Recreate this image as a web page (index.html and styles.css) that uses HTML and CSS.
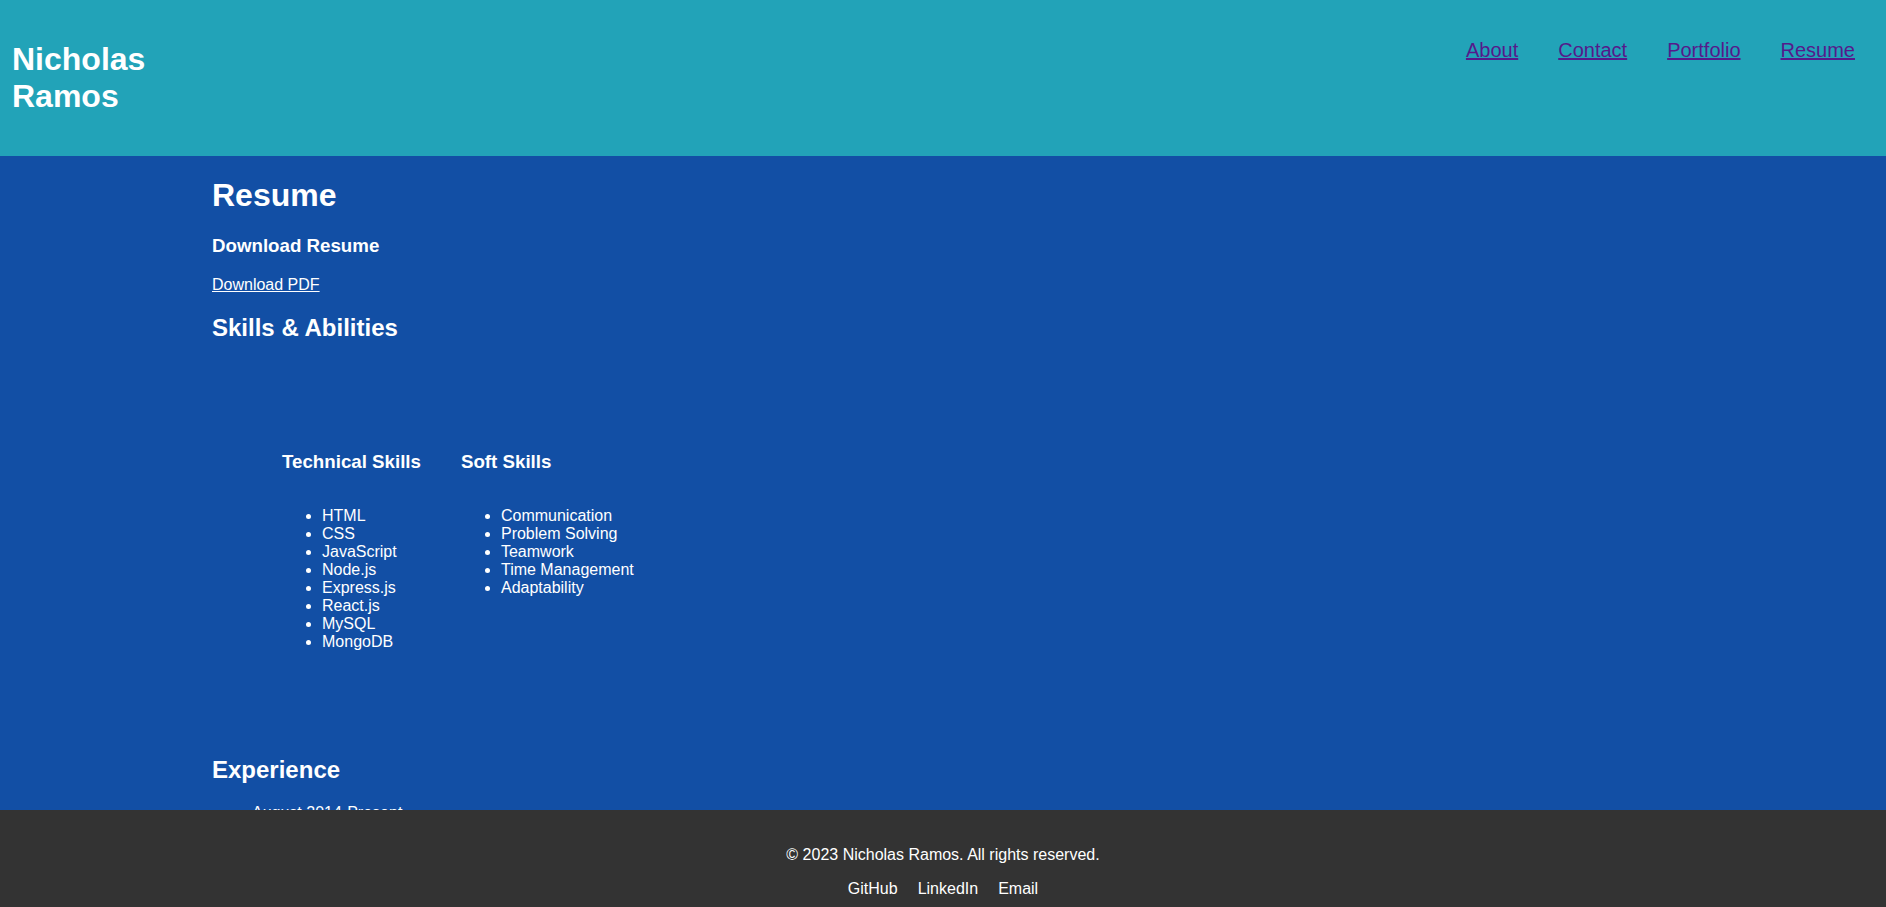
FILE: index.html
```html
<!DOCTYPE html>
<html lang="en">
<head>
<meta charset="utf-8">
<title>Nicholas Ramos - Resume</title>
<link rel="stylesheet" href="styles.css">
</head>
<body>
<header class="site-header">
  <h1 class="site-title">Nicholas Ramos</h1>
  <nav class="site-nav">
    <ul class="nav-list">
      <li><a class="nav-link" href="#about">About</a></li>
      <li><a class="nav-link" href="#contact">Contact</a></li>
      <li><a class="nav-link" href="#portfolio">Portfolio</a></li>
      <li><a class="nav-link" href="#resume">Resume</a></li>
    </ul>
  </nav>
</header>
<main class="content" id="resume">
  <h1 class="page-title">Resume</h1>
  <h3>Download Resume</h3>
  <p class="download"><a class="download-link" href="#pdf">Download PDF</a></p>
  <h2>Skills &amp; Abilities</h2>
  <div class="skills">
    <div class="skills-row">
      <div class="skill-col">
        <h3>Technical Skills</h3>
        <ul class="skill-list">
          <li>HTML</li>
          <li>CSS</li>
          <li>JavaScript</li>
          <li>Node.js</li>
          <li>Express.js</li>
          <li>React.js</li>
          <li>MySQL</li>
          <li>MongoDB</li>
        </ul>
      </div>
      <div class="skill-col">
        <h3>Soft Skills</h3>
        <ul class="skill-list">
          <li>Communication</li>
          <li>Problem Solving</li>
          <li>Teamwork</li>
          <li>Time Management</li>
          <li>Adaptability</li>
        </ul>
      </div>
    </div>
  </div>
  <h2>Experience</h2>
  <ul class="exp-list">
    <li>August 2014-Present
      <ul>
        <li>Web Developer</li>
        <li>Building and maintaining web applications</li>
      </ul>
    </li>
  </ul>
</main>
<footer class="site-footer">
  <p class="copyright">&copy; 2023 Nicholas Ramos. All rights reserved.</p>
  <div class="footer-links">
    <a class="footer-link" href="#github">GitHub</a><a class="footer-link" href="#linkedin">LinkedIn</a><a class="footer-link" href="#email">Email</a>
  </div>
</footer>
</body>
</html>
```

FILE: styles.css
```css
html, body {
  margin: 0;
  padding: 0;
}

body {
  font-family: "Liberation Sans", Arial, sans-serif;
  font-size: 16px;
  color: #ffffff;
  background: #124fa5;
}

.site-header {
  display: flex;
  justify-content: space-between;
  align-items: flex-start;
  background: #22a3b8;
  padding: 20px 11px 20px 12px;
}

.site-title {
  font-size: 32px;
  margin: 21px 0;
  max-width: 140px;
  color: #ffffff;
}

.site-nav {
  padding-top: 19px;
}

.nav-list {
  display: flex;
  list-style: none;
  margin: 0;
  padding: 0;
}

.nav-link {
  font-size: 20px;
  color: #551a8b;
  margin: 0 20px;
}

.content {
  padding: 21px 212px 120px;
  background: #124fa5;
}

.page-title {
  font-size: 32px;
  margin: 0 0 21.44px;
}

.download {
  margin: 16px 0;
}

.download-link {
  color: #ffffff;
}

.skills {
  padding: 70px 70px 69px;
}

.skills-row {
  display: flex;
  gap: 40px;
}

.skill-col {
  display: flex;
  flex-direction: column;
}

.skill-list {
  margin: 16px 0;
  padding-left: 40px;
}

.exp-list {
  padding-left: 40px;
}

.site-footer {
  position: fixed;
  left: 0;
  right: 0;
  bottom: 0;
  height: 97px;
  box-sizing: border-box;
  padding-top: 36px;
  background: #333333;
  color: #ffffff;
  text-align: center;
}

.copyright {
  margin: 0 0 16px;
}

.footer-link {
  color: #ffffff;
  text-decoration: none;
  margin: 0 10px;
}
```
